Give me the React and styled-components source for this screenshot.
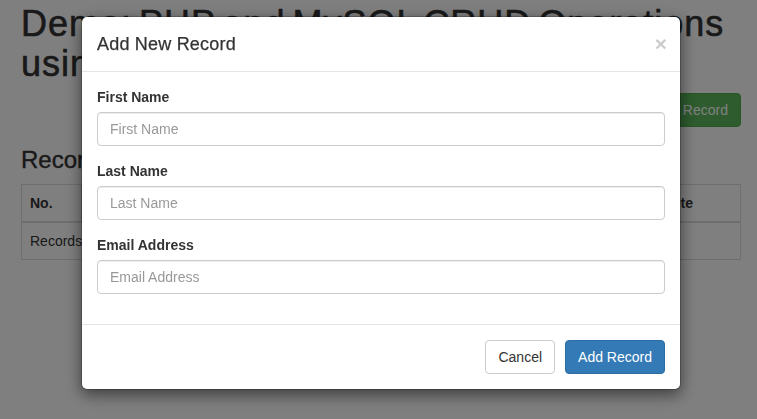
import React from 'react';
import styled, { createGlobalStyle } from 'styled-components';

const Global = createGlobalStyle`
  * {
    box-sizing: border-box;
  }

  body {
    margin: 0;
    font-family: "Liberation Sans", Helvetica, Arial, sans-serif;
    font-size: 14px;
    line-height: 1.42857;
    color: #333;
    background: #fff;
    overflow: hidden;
  }
`;

const Container = styled.div`
  width: 720px;
  margin-left: 21px;
`;

// Helvetica Neue "medium" headings: thicken the Liberation strokes a little
const Title = styled.h1`
  font-size: 36px;
  font-weight: 500;
  line-height: 1.1;
  margin: 4px 0 10px;
  letter-spacing: 1px;
  word-spacing: -4px;
  -webkit-text-stroke: 0.6px currentColor;
`;

const Toolbar = styled.div`
  display: flex;
  justify-content: flex-end;
`;

const Button = styled.button`
  display: inline-block;
  height: 34px;
  padding: 6px 12px;
  font-family: inherit;
  font-size: 14px;
  line-height: 20px;
  border-radius: 4px;
  border: 1px solid ${p => p.$border};
  background: ${p => p.$bg};
  color: ${p => p.$color};
  cursor: pointer;
`;

const SubTitle = styled.h3`
  font-size: 24px;
  font-weight: 500;
  line-height: 1.1;
  margin: 20px 0 10px;
  -webkit-text-stroke: 0.4px currentColor;
`;

const Table = styled.table`
  width: 100%;
  border-collapse: collapse;
  border: 1px solid #ddd;

  th,
  td {
    padding: 8px;
    line-height: 20px;
    text-align: left;
    border: 1px solid #ddd;
  }

  th {
    border-bottom-width: 2px;
    font-weight: bold;
  }
`;

const Col = styled.th`
  width: ${p => p.$w}px;
`;

const Backdrop = styled.div`
  position: fixed;
  inset: 0;
  background: rgba(0, 0, 0, 0.5);
`;

const Modal = styled.div`
  position: fixed;
  left: 81px;
  top: 16px;
  width: 600px;
  background: #fff;
  border: 1px solid rgba(0, 0, 0, 0.2);
  border-radius: 6px;
  box-shadow: 0 5px 15px rgba(0, 0, 0, 0.5);
  background-clip: padding-box;
`;

const Header = styled.div`
  display: flex;
  justify-content: space-between;
  align-items: center;
  padding: 15px;
  border-bottom: 1px solid #e5e5e5;
`;

const ModalTitle = styled.h4`
  margin: 0;
  font-size: 18px;
  font-weight: 500;
  line-height: 24px;
  letter-spacing: 0.2px;
  -webkit-text-stroke: 0.25px currentColor;
`;

const Close = styled.span`
  font-size: 21px;
  font-weight: bold;
  line-height: 1;
  color: #000;
  opacity: 0.2;
  margin: -2px -2px 0 0;
`;

const Body = styled.div`
  padding: 15px;
`;

const Group = styled.div`
  margin-bottom: 15px;
`;

const Label = styled.label`
  display: block;
  margin-bottom: 5px;
  font-weight: bold;
  line-height: 20px;
`;

const Input = styled.input`
  display: block;
  width: 100%;
  height: 34px;
  padding: 6px 12px;
  font-family: inherit;
  font-size: 14px;
  line-height: 20px;
  color: #555;
  border: 1px solid #ccc;
  border-radius: 4px;
  box-shadow: inset 0 1px 1px rgba(0, 0, 0, 0.075);

  &::placeholder {
    color: #999;
  }
`;

const Footer = styled.div`
  display: flex;
  justify-content: flex-end;
  gap: 10px;
  padding: 15px;
  border-top: 1px solid #e5e5e5;
`;

const fields = ['First Name', 'Last Name', 'Email Address'];

export default function App() {
  return (
    <>
      <Global />
      <Container>
        <Title>Demo: PHP and MySQL CRUD Operations using jQuery</Title>
        <Toolbar>
          <Button $bg="#5cb85c" $border="#4cae4c" $color="#fff">Add Record</Button>
        </Toolbar>
        <SubTitle>Records:</SubTitle>
        <Table>
          <thead>
            <tr>
              <Col $w={60}>No.</Col>
              <th>First Name</th>
              <th>Last Name</th>
              <th>Email Address</th>
              <th>Update</th>
              <Col $w={98}>Delete</Col>
            </tr>
          </thead>
          <tbody>
            <tr>
              <td colSpan={6}>Records not found!</td>
            </tr>
          </tbody>
        </Table>
      </Container>

      <Backdrop />

      <Modal>
        <Header>
          <ModalTitle>Add New Record</ModalTitle>
          <Close>&times;</Close>
        </Header>
        <Body>
          {fields.map(f => (
            <Group key={f}>
              <Label>{f}</Label>
              <Input placeholder={f} />
            </Group>
          ))}
        </Body>
        <Footer>
          <Button $bg="#fff" $border="#ccc" $color="#333">Cancel</Button>
          <Button $bg="#337ab7" $border="#2e6da4" $color="#fff">Add Record</Button>
        </Footer>
      </Modal>
    </>
  );
}
